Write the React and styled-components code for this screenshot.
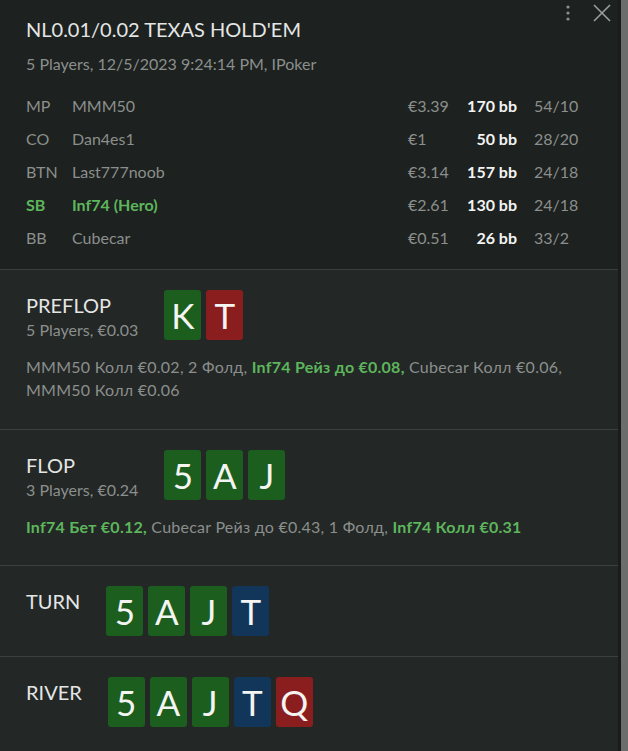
import React from "react";
import styled, { createGlobalStyle } from "styled-components";

const Global = createGlobalStyle`
  html, body { margin: 0; padding: 0; background: #1d211f; }
  body { font-family: "Lato", "Noto Sans", sans-serif; }
`;

const Window = styled.div`
  display: flex;
  width: 628px;
  height: 751px;
  overflow: hidden;
`;

const Panel = styled.div`
  flex: 1;
  display: flex;
  flex-direction: column;
  background: #232726;
  border-right: 3px solid #191c1b;
`;

const Scroll = styled.div`
  width: 7px;
  background: #6b6c6c;
`;

const Header = styled.header`
  position: relative;
  background: #1d211f;
  padding: 16px 34px 15px 26px;
  border-bottom: 1px solid #3c403e;
`;

const Title = styled.h1`
  margin: 0;
  font-size: 20px;
  line-height: 27px;
  font-weight: 400;
  color: #e4e6e5;
`;

const Sub = styled.div`
  font-size: 16px;
  line-height: 22px;
  color: #8b8f8d;
  margin-top: ${(p) => p.$gap || "0px"};
`;

const Tools = styled.div`
  position: absolute;
  top: 3px;
  right: 6px;
  display: flex;
  align-items: center;
  gap: 21px;
`;

const Players = styled.div`
  display: grid;
  grid-template-columns: 46px 1fr 58px 51px 67px;
  margin-top: 14px;
  font-size: 16px;
  line-height: 33px;
`;

const Cell = styled.div`
  color: ${(p) => (p.$hero ? "#5db65c" : p.$strong ? "#f2f3f2" : "#8b8f8d")};
  font-weight: ${(p) => (p.$hero || p.$strong ? 700 : 400)};
  text-align: ${(p) => (p.$right ? "right" : "left")};
  padding-left: ${(p) => (p.$pad ? "17px" : "0")};
  white-space: nowrap;
`;

const Street = styled.section`
  padding: ${(p) => p.$pad};
  border-bottom: ${(p) => (p.$last ? "none" : "1px solid #3c403e")};
`;

const StreetHead = styled.div`
  display: flex;
  align-items: flex-start;
  gap: 26px;
`;

const Label = styled.div`
  padding-top: 2px;
`;

const StreetName = styled.div`
  font-size: 20px;
  line-height: 27px;
  color: #e4e6e5;
`;

const Cards = styled.div`
  display: flex;
  gap: 5px;
`;

const Card = styled.div`
  width: 37px;
  height: 50px;
  border-radius: 3px;
  background: ${(p) => p.$bg};
  color: #f4f4f2;
  font-size: 35px;
  line-height: 50px;
  text-align: center;
`;

const Actions = styled.div`
  margin-top: 14px;
  font-size: 16px;
  line-height: 23px;
  letter-spacing: 0.25px;
  color: #8b8f8d;
`;

const Hi = styled.span`
  color: #5db65c;
  font-weight: 700;
`;

const suitColor = { g: "#1b5e1d", r: "#8a1e1e", b: "#12355a" };

const players = [
  ["MP", "MMM50", "€3.39", "170 bb", "54/10"],
  ["CO", "Dan4es1", "€1", "50 bb", "28/20"],
  ["BTN", "Last777noob", "€3.14", "157 bb", "24/18"],
  ["SB", "Inf74 (Hero)", "€2.61", "130 bb", "24/18", true],
  ["BB", "Cubecar", "€0.51", "26 bb", "33/2"],
];

const CardRow = ({ cards }) => (
  <Cards>
    {cards.map(([r, s], i) => (
      <Card key={i} $bg={suitColor[s]}>
        {r}
      </Card>
    ))}
  </Cards>
);

export default function App() {
  return (
    <>
      <Global />
      <Window>
        <Panel>
          <Header>
            <Tools>
              <svg width="6" height="20" viewBox="0 0 6 20">
                <circle cx="3" cy="4" r="1.6" fill="#8c8f8e" />
                <circle cx="3" cy="10" r="1.6" fill="#8c8f8e" />
                <circle cx="3" cy="16" r="1.6" fill="#8c8f8e" />
              </svg>
              <svg width="20" height="20" viewBox="0 0 20 20">
                <path d="M2 2 L18 18 M18 2 L2 18" stroke="#9b9e9d" strokeWidth="1.6" fill="none" />
              </svg>
            </Tools>
            <Title>NL0.01/0.02 TEXAS HOLD'EM</Title>
            <Sub $gap="10px">5 Players, 12/5/2023 9:24:14 PM, IPoker</Sub>
            <Players>
              {players.map(([pos, name, amt, bb, st, hero]) => (
                <React.Fragment key={pos}>
                  <Cell $hero={hero}>{pos}</Cell>
                  <Cell $hero={hero}>{name}</Cell>
                  <Cell>{amt}</Cell>
                  <Cell $strong $right>{bb}</Cell>
                  <Cell $pad>{st}</Cell>
                </React.Fragment>
              ))}
            </Players>
          </Header>

          <Street $pad="20px 34px 28px 26px">
            <StreetHead>
              <Label>
                <StreetName>PREFLOP</StreetName>
                <Sub>5 Players, €0.03</Sub>
              </Label>
              <CardRow cards={[["K", "g"], ["T", "r"]]} />
            </StreetHead>
            <Actions>
              MMM50 Колл €0.02, 2 Фолд, <Hi>Inf74 Рейз до €0.08,</Hi> Cubecar Колл €0.06, MMM50 Колл €0.06
            </Actions>
          </Street>

          <Street $pad="20px 34px 27px 26px">
            <StreetHead>
              <Label>
                <StreetName>FLOP</StreetName>
                <Sub>3 Players, €0.24</Sub>
              </Label>
              <CardRow cards={[["5", "g"], ["A", "g"], ["J", "g"]]} />
            </StreetHead>
            <Actions>
              <Hi>Inf74 Бет €0.12,</Hi> Cubecar Рейз до €0.43, 1 Фолд, <Hi>Inf74 Колл €0.31</Hi>
            </Actions>
          </Street>

          <Street $pad="20px 34px 20px 26px">
            <StreetHead>
              <Label>
                <StreetName>TURN</StreetName>
              </Label>
              <CardRow cards={[["5", "g"], ["A", "g"], ["J", "g"], ["T", "b"]]} />
            </StreetHead>
          </Street>

          <Street $pad="20px 34px 19px 26px" $last>
            <StreetHead>
              <Label>
                <StreetName>RIVER</StreetName>
              </Label>
              <CardRow cards={[["5", "g"], ["A", "g"], ["J", "g"], ["T", "b"], ["Q", "r"]]} />
            </StreetHead>
          </Street>
        </Panel>
        <Scroll />
      </Window>
    </>
  );
}
